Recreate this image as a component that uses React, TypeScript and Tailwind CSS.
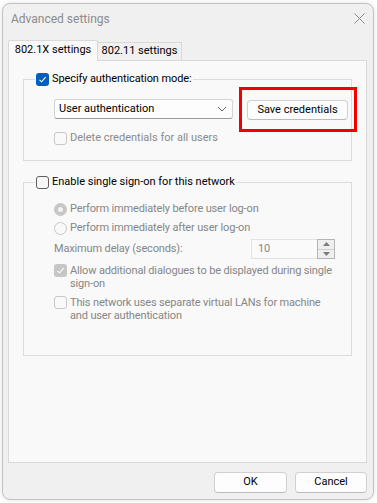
import React from 'react';

// Win11 style check box
function CheckBox({ checked = false, disabled = false }: { checked?: boolean; disabled?: boolean }) {
  if (checked) {
    return (
      <span
        className={`flex h-[13px] w-[13px] shrink-0 items-center justify-center rounded-[3px] ${
          disabled ? 'bg-[#c6c6c6]' : 'bg-[#005fb8]'
        }`}
      >
        <svg width="9" height="9" viewBox="0 0 9 9">
          <path d="M1.5 4.8 L3.6 6.8 L7.6 2.2" fill="none" stroke="#ffffff" strokeWidth="1.1" />
        </svg>
      </span>
    );
  }
  return (
    <span
      className={`h-[13px] w-[13px] shrink-0 rounded-[3px] border ${
        disabled ? 'border-[#c8c8c8] bg-[#f9f9f9]' : 'border-[#5f5f5f] bg-[#f6f6f6]'
      }`}
    />
  );
}

function Radio({ checked = false }: { checked?: boolean }) {
  if (checked) {
    return (
      <span className="flex h-[13px] w-[13px] shrink-0 items-center justify-center rounded-full bg-[#c6c6c6]">
        <span className="h-[5px] w-[5px] rounded-full bg-[#f3f3f3]" />
      </span>
    );
  }
  return <span className="h-[13px] w-[13px] shrink-0 rounded-full border border-[#c8c8c8] bg-[#f9f9f9]" />;
}

export default function App() {
  return (
    <div className="h-[503px] w-[377px] overflow-hidden bg-white pl-[2px] pt-[3px] font-['Roboto','Liberation_Sans',sans-serif] text-[11px] text-black">
      <div className="flex h-[497px] w-[372px] flex-col rounded-[8px] border border-[#c2c2c2] bg-[#f0f0f0] shadow-[0_0_5px_rgba(0,0,0,0.12)]">
        {/* Title bar */}
        <div className="flex h-[29px] items-center justify-between pl-[8px] pr-[8px]">
          <span className="text-[12px] text-[#8c8c8c]">Advanced settings</span>
          <svg width="11" height="11" viewBox="0 0 11 11">
            <path d="M0.5 0.5 L10.5 10.5 M10.5 0.5 L0.5 10.5" stroke="#8a8a8a" strokeWidth="1" />
          </svg>
        </div>

        {/* Tabs */}
        <div className="mt-[7px] flex h-[21px] items-end pl-[5px]">
          <div className="relative z-10 flex h-[21px] w-[90px] items-center justify-center rounded-t-[2px] border border-b-0 border-[#d9d9d9] bg-[#f9f9f9] pb-[1px]">
            802.1X settings
          </div>
          <div className="flex h-[19px] w-[84px] items-center justify-center border border-l-0 border-[#d9d9d9] bg-[#f0f0f0]">
            802.11 settings
          </div>
        </div>

        {/* Tab panel */}
        <div className="-mt-px ml-[5px] h-[403px] w-[359px] border border-[#d9d9d9] bg-[#f9f9f9] px-[14px] pt-[11px]">
          <fieldset className="min-w-0 border border-[#dcdcdc]">
            <legend className="ml-[11px] flex h-[14px] items-center gap-[3px] px-[1px] tracking-[-0.1px]">
              <CheckBox checked />
              <span>Specify authentication mode:</span>
            </legend>
            <div className="pb-[15px] pl-[30px]">
              <div className="mt-[13px] flex items-start gap-[14px]">
                <div className="flex h-[20px] w-[179px] items-center justify-between rounded-[3px] border border-[#d3d3d3] border-b-[#9a9a9a] bg-[#fdfdfd] pl-[4px] pr-[5px]">
                  <span>User authentication</span>
                  <svg width="10" height="6" viewBox="0 0 10 6">
                    <path d="M1 1 L5 5 L9 1" fill="none" stroke="#6a6a6a" strokeWidth="1" />
                  </svg>
                </div>
                <div className="relative mt-px">
                  <div className="flex h-[20px] w-[101px] items-center justify-center rounded-[4px] border border-[#d0d0d0] border-b-[#bcbcbc] bg-[#fdfdfd]">
                    Save credentials
                  </div>
                  <div className="pointer-events-none absolute -bottom-[12px] -left-[8px] -right-[9px] -top-[13px] border-[3px] border-[#f20000]" />
                </div>
              </div>
              <div className="mt-[12px] flex h-[13px] items-center gap-[3px] text-[#8a8a8a]">
                <CheckBox disabled />
                <span>Delete credentials for all users</span>
              </div>
            </div>
          </fieldset>

          <fieldset className="mt-[14px] min-w-0 border border-[#dcdcdc] text-[#868686]">
            <legend className="ml-[11px] flex h-[14px] items-center gap-[3px] px-[1px] text-black">
              <CheckBox />
              <span>Enable single sign-on for this network</span>
            </legend>
            <div className="whitespace-nowrap pb-[33px] pl-[30px] pr-[16px] tracking-[-0.15px]">
              <div className="mt-[13px] flex h-[14px] items-center gap-[3px]">
                <Radio checked />
                <span>Perform immediately before user log-on</span>
              </div>
              <div className="mt-[5px] flex h-[14px] items-center gap-[3px]">
                <Radio />
                <span>Perform immediately after user log-on</span>
              </div>
              <div className="mt-[4px] flex h-[20px] items-center justify-between">
                <span>Maximum delay (seconds):</span>
                <div className="flex h-[20px]">
                  <div className="flex h-[20px] w-[66px] items-center border border-r-0 border-[#e2e2e2] bg-[#fafafa] pl-[6px]">
                    10
                  </div>
                  <div className="flex h-[20px] w-[18px] flex-col border border-[#b5b5b5] bg-[#efefef]">
                    <div className="flex flex-1 items-center justify-center border-b border-[#cfcfcf]">
                      <svg width="7" height="4" viewBox="0 0 7 4">
                        <path d="M0 4 L3.5 0 L7 4 Z" fill="#7c7c7c" />
                      </svg>
                    </div>
                    <div className="flex flex-1 items-center justify-center">
                      <svg width="7" height="4" viewBox="0 0 7 4">
                        <path d="M0 0 L3.5 4 L7 0 Z" fill="#7c7c7c" />
                      </svg>
                    </div>
                  </div>
                </div>
              </div>
              <div className="mt-[5px] flex items-start gap-[3px] leading-[13px]">
                <CheckBox checked disabled />
                <span>
                  Allow additional dialogues to be displayed during single
                  <br />
                  sign-on
                </span>
              </div>
              <div className="mt-[6px] flex items-start gap-[3px] leading-[13px]">
                <CheckBox disabled />
                <span>
                  This network uses separate virtual LANs for machine
                  <br />
                  and user authentication
                </span>
              </div>
            </div>
          </fieldset>
        </div>

        {/* Footer buttons */}
        <div className="mt-[9px] flex justify-end gap-[8px] pr-[6px]">
          <div className="flex h-[21px] w-[73px] items-center justify-center rounded-[4px] border border-[#d0d0d0] border-b-[#bcbcbc] bg-[#fdfdfd]">
            OK
          </div>
          <div className="flex h-[21px] w-[72px] items-center justify-center rounded-[4px] border border-[#d0d0d0] border-b-[#bcbcbc] bg-[#fdfdfd]">
            Cancel
          </div>
        </div>
      </div>
    </div>
  );
}
